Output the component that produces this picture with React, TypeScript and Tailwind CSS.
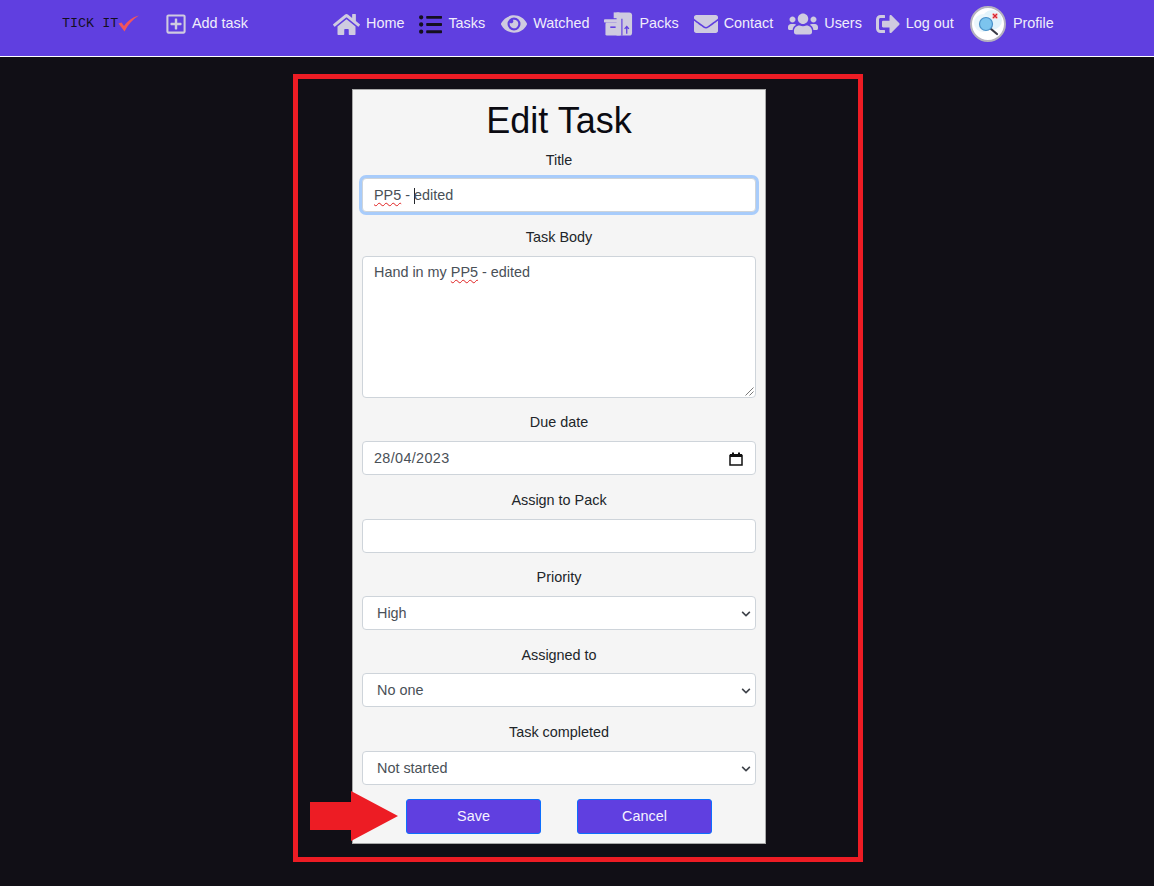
import React from "react";
import { FaHome, FaListUl, FaEye, FaEnvelope, FaUsers, FaSignOutAlt, FaRegPlusSquare, FaChevronDown } from "react-icons/fa";

function PacksIcon() {
  return (
    <svg width="30" height="24" viewBox="0 0 31 24" className="shrink-0">
      <path d="M13 0h13a3 3 0 0 1 3 3v18a3 3 0 0 1-3 3H13z" fill="#cfcbe0" />
      <path d="M10 0h6v6h-6z" fill="#cfcbe0" />
      <rect x="0" y="7" width="18.5" height="3.5" rx="0.5" fill="#cfcbe0" />
      <rect x="1.5" y="10.5" width="16" height="13.5" rx="1.5" fill="#cfcbe0" />
      <path d="M18.5 6.5V24" stroke="#603fe0" strokeWidth="1.2" />
      <rect x="6.5" y="14.5" width="5.5" height="1.6" fill="#603fe0" />
      <path d="M23.5 22v-7M21.3 17l2.2-2.4 2.2 2.4" stroke="#603fe0" strokeWidth="1.3" fill="none" />
    </svg>
  );
}

function Avatar() {
  return (
    <div className="mr-px flex h-[36px] w-[36px] shrink-0 items-center justify-center rounded-full border-2 border-[#b5b2bf] bg-white">
      <svg width="30" height="30" viewBox="0 0 30 30">
        <circle cx="19" cy="11" r="10" fill="#e3f3fb" />
        <circle cx="10" cy="14" r="9" fill="#eaf6fc" />
        <path d="M18 20l6 5" stroke="#3a3a44" strokeWidth="2.2" strokeLinecap="round" />
        <circle cx="13" cy="15" r="6.5" fill="#7cc4ee" stroke="#4a90c8" strokeWidth="1.2" />
        <rect x="19" y="4" width="6" height="6" fill="#f6d3d6" />
        <path d="M20 5l4 4M24 5l-4 4" stroke="#d8242f" strokeWidth="1.4" />
      </svg>
    </div>
  );
}

function NavItem({ icon, label, className = "", gap = "gap-[6px]" }: { icon: React.ReactNode; label: string; className?: string; gap?: string }) {
  return (
    <a className={`flex items-center ${gap} whitespace-nowrap text-[14.4px] text-[#f0edfb] ${className}`}>
      {icon}
      <span>{label}</span>
    </a>
  );
}

function Field({ label, children, tight = false, short = false }: { label: string; children: React.ReactNode; tight?: boolean; short?: boolean }) {
  return (
    <div className={short ? "mb-[14px]" : "mb-[15px]"}>
      <div className={`${tight ? "mb-[7px]" : "mb-[8px]"} h-[21px] text-center text-[14.4px] leading-[21px] text-[#212529]`}>{label}</div>
      {children}
    </div>
  );
}

const boxClass = "flex h-[34px] items-center rounded-[4px] border border-[#ced4da] bg-white pt-px text-[14.4px] text-[#495057]";

function Squiggle({ children }: { children: React.ReactNode }) {
  return <span className="underline decoration-[#e02020] decoration-wavy decoration-1 underline-offset-2">{children}</span>;
}

function Select({ value }: { value: string }) {
  return (
    <div className={`${boxClass} justify-between pl-[14px] pr-[4px]`}>
      <span>{value}</span>
      <FaChevronDown size={10} className="text-[#3f434a]" />
    </div>
  );
}

export default function App() {
  return (
    <div className="relative min-h-[886px] bg-[#110f16] font-['Liberation_Sans',Arial,sans-serif]">
      <nav className="flex h-[57px] items-center border-b border-white bg-[#603fe0] pb-[8px] pl-[62px]">
        <div className="flex w-[78px] items-center">
          <span className="whitespace-nowrap font-['Liberation_Mono',monospace] text-[13.4px] leading-none text-[#14101f]">TICK IT</span>
          <svg width="22" height="17" viewBox="0 0 22 17" className="-mt-[2px] shrink-0">
            <path d="M0.5 8.5l3-1 2.5 3.5c3.5-5 8.5-9 15-10.5-6 3.5-11 9-14.5 16z" fill="#f2555a" />
          </svg>
        </div>
        <NavItem className="ml-[25px]" gap="gap-[5px]" label="Add task" icon={<FaRegPlusSquare size={22} className="text-[#cfcbe0]" />} />
        <NavItem className="ml-[85px]" label="Home" icon={<FaHome size={27} className="text-[#cfcbe0]" />} />
        <NavItem className="ml-[15px]" label="Tasks" icon={<FaListUl size={23} className="text-[#14101f]" />} />
        <NavItem className="ml-[16px]" label="Watched" icon={<FaEye size={26} className="text-[#cfcbe0]" />} />
        <NavItem className="ml-[15px]" gap="gap-[5px]" label="Packs" icon={<PacksIcon />} />
        <NavItem className="ml-[15px]" label="Contact" icon={<FaEnvelope size={24} className="text-[#cfcbe0]" />} />
        <NavItem className="ml-[15px]" label="Users" icon={<FaUsers size={30} className="text-[#cfcbe0]" />} />
        <NavItem className="ml-[14px]" label="Log out" icon={<FaSignOutAlt size={24} className="text-[#cfcbe0]" />} />
        <NavItem className="ml-[16px]" label="Profile" icon={<Avatar />} />
      </nav>

      <main className="pl-[352px] pt-[32px]">
        <div className="h-[755px] w-[414px] border border-[#a9a9a9] bg-[#f5f5f5] px-[9px]">
          <h1 className="h-[60px] text-center text-[36px] font-normal leading-[62px] text-[#0b0b12]">Edit Task</h1>
          <Field label="Title" tight>
            <div className={`${boxClass} border-[#86b7fe] pl-[11px] shadow-[0_0_0_3px_#a8ccfb]`}>
              <Squiggle>PP5</Squiggle>
              <span className="whitespace-pre"> - </span>
              <span className="inline-block h-[16px] w-px bg-[#23262b]" />
              <span className="-ml-px">edited</span>
            </div>
          </Field>
          <Field label="Task Body" short>
            <div className="relative h-[142px] rounded-[4px] border border-[#ced4da] bg-white px-[11px] py-[6px] text-[14.4px] leading-[18px] text-[#495057]">
              Hand in my <Squiggle>PP5</Squiggle> - edited
              <svg width="9" height="9" viewBox="0 0 9 9" className="absolute bottom-px right-px">
                <path d="M0.5 8.5L8.5 0.5M4.5 8.5L8.5 4.5" stroke="#6b6b6b" strokeWidth="0.9" />
              </svg>
            </div>
          </Field>
          <Field label="Due date">
            <div className={`${boxClass} justify-between pl-[11px] pr-[12px]`}>
              <span className="tracking-[0.35px]">28/04/2023</span>
              <svg width="14" height="14" viewBox="0 0 14 14">
                <path d="M1 3.5h12V13H1z" fill="none" stroke="#111" strokeWidth="1.5" />
                <rect x="1" y="2" width="12" height="3" fill="#111" />
                <rect x="3" y="0.5" width="2" height="2" fill="#111" />
                <rect x="9" y="0.5" width="2" height="2" fill="#111" />
              </svg>
            </div>
          </Field>
          <Field label="Assign to Pack" short>
            <div className={boxClass} />
          </Field>
          <Field label="Priority">
            <Select value="High" />
          </Field>
          <Field label="Assigned to" tight>
            <Select value="No one" />
          </Field>
          <Field label="Task completed">
            <Select value="Not started" />
          </Field>
          <div className="-mt-px flex justify-center gap-[36px]">
            <button className="h-[35px] w-[135px] rounded-[3px] border border-[#0d6efd] bg-[#603fe0] text-[14.4px] text-[#f5f3ff]">Save</button>
            <button className="h-[35px] w-[135px] rounded-[3px] border border-[#0d6efd] bg-[#603fe0] text-[14.4px] text-[#f5f3ff]">Cancel</button>
          </div>
        </div>
      </main>

      <div className="pointer-events-none absolute left-[293px] top-[74px] h-[788px] w-[570px] border-[5px] border-[#ed1c24]" />
      <svg width="90" height="50" viewBox="0 0 90 50" className="pointer-events-none absolute left-[310px] top-[791px]">
        <path d="M0 11h41V0l47 25-47 25V39H0z" fill="#ed1c24" />
      </svg>
    </div>
  );
}
